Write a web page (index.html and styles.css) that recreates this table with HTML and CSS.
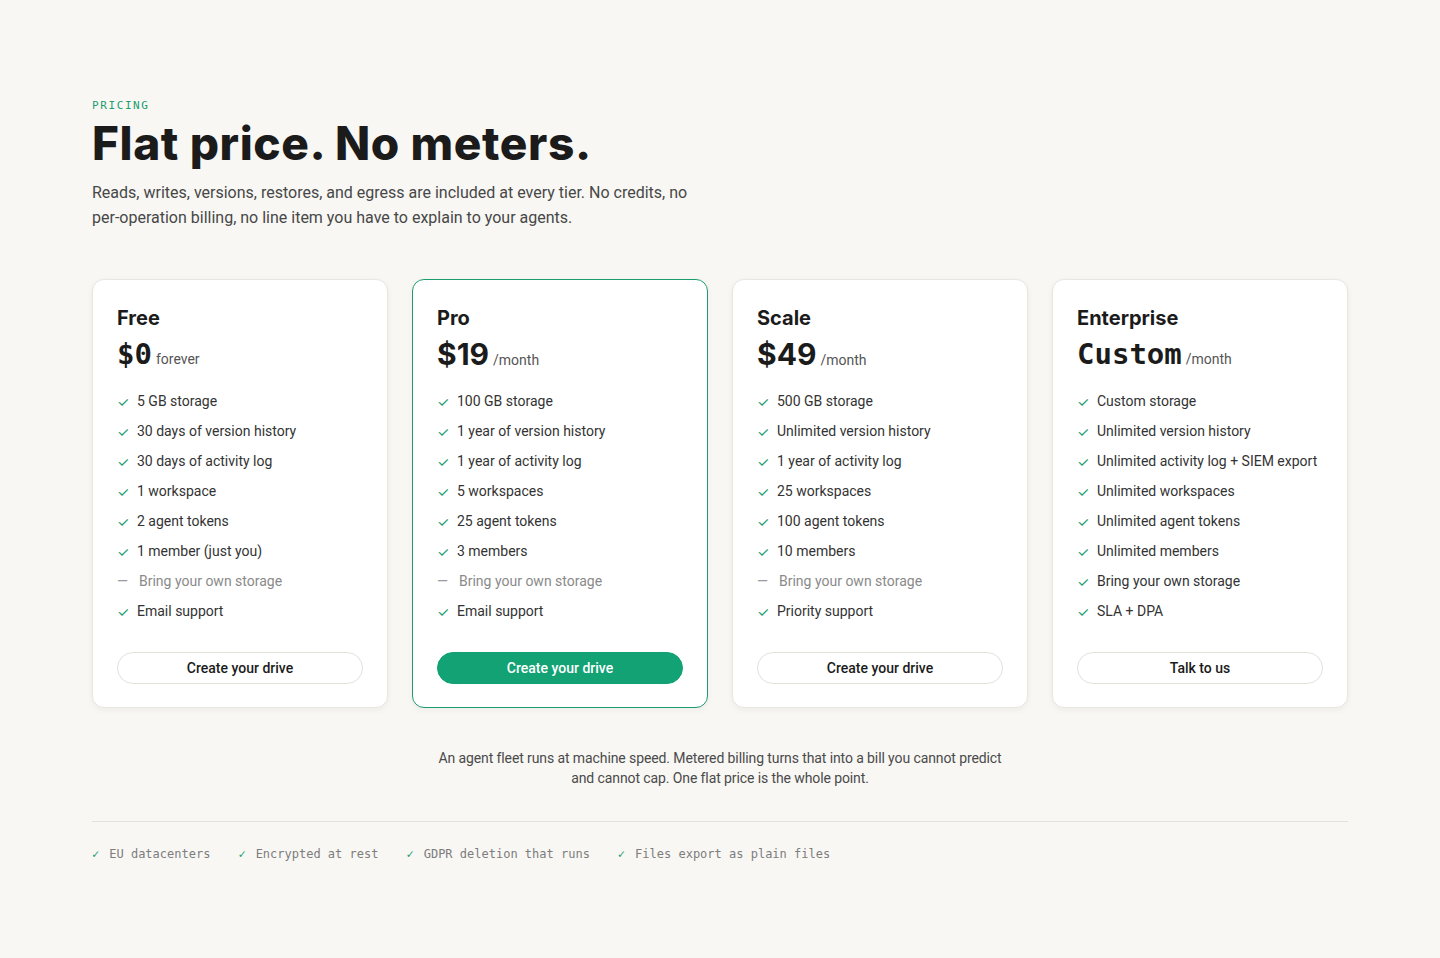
FILE: index.html
```html
<!DOCTYPE html>
<html lang="en">
<head>
<meta charset="utf-8">
<title>Pricing</title>
<link rel="stylesheet" href="styles.css">
</head>
<body>
<main class="page">
  <header class="intro">
    <div class="eyebrow">PRICING</div>
    <h1 class="title">Flat price. No meters.</h1>
    <p class="lede">Reads, writes, versions, restores, and egress are included at every tier. No credits, no per-operation billing, no line item you have to explain to your agents.</p>
  </header>

  <section class="plans">
    <article class="plan">
      <h2 class="plan-name">Free</h2>
      <div class="price"><span class="amount mono">$0</span><span class="period">forever</span></div>
      <ul class="features">
        <li><span class="mark">✓</span>5 GB storage</li>
        <li><span class="mark">✓</span>30 days of version history</li>
        <li><span class="mark">✓</span>30 days of activity log</li>
        <li><span class="mark">✓</span>1 workspace</li>
        <li><span class="mark">✓</span>2 agent tokens</li>
        <li><span class="mark">✓</span>1 member (just you)</li>
        <li class="off"><span class="mark">—</span>Bring your own storage</li>
        <li><span class="mark">✓</span>Email support</li>
      </ul>
      <button class="btn">Create your drive</button>
    </article>

    <article class="plan featured">
      <h2 class="plan-name">Pro</h2>
      <div class="price"><span class="amount">$19</span><span class="period">/month</span></div>
      <ul class="features">
        <li><span class="mark">✓</span>100 GB storage</li>
        <li><span class="mark">✓</span>1 year of version history</li>
        <li><span class="mark">✓</span>1 year of activity log</li>
        <li><span class="mark">✓</span>5 workspaces</li>
        <li><span class="mark">✓</span>25 agent tokens</li>
        <li><span class="mark">✓</span>3 members</li>
        <li class="off"><span class="mark">—</span>Bring your own storage</li>
        <li><span class="mark">✓</span>Email support</li>
      </ul>
      <button class="btn btn-primary">Create your drive</button>
    </article>

    <article class="plan">
      <h2 class="plan-name">Scale</h2>
      <div class="price"><span class="amount">$49</span><span class="period">/month</span></div>
      <ul class="features">
        <li><span class="mark">✓</span>500 GB storage</li>
        <li><span class="mark">✓</span>Unlimited version history</li>
        <li><span class="mark">✓</span>1 year of activity log</li>
        <li><span class="mark">✓</span>25 workspaces</li>
        <li><span class="mark">✓</span>100 agent tokens</li>
        <li><span class="mark">✓</span>10 members</li>
        <li class="off"><span class="mark">—</span>Bring your own storage</li>
        <li><span class="mark">✓</span>Priority support</li>
      </ul>
      <button class="btn">Create your drive</button>
    </article>

    <article class="plan">
      <h2 class="plan-name">Enterprise</h2>
      <div class="price"><span class="amount mono">Custom</span><span class="period">/month</span></div>
      <ul class="features">
        <li><span class="mark">✓</span>Custom storage</li>
        <li><span class="mark">✓</span>Unlimited version history</li>
        <li><span class="mark">✓</span>Unlimited activity log + SIEM export</li>
        <li><span class="mark">✓</span>Unlimited workspaces</li>
        <li><span class="mark">✓</span>Unlimited agent tokens</li>
        <li><span class="mark">✓</span>Unlimited members</li>
        <li><span class="mark">✓</span>Bring your own storage</li>
        <li><span class="mark">✓</span>SLA + DPA</li>
      </ul>
      <button class="btn">Talk to us</button>
    </article>
  </section>

  <p class="note">An agent fleet runs at machine speed. Metered billing turns that into a bill you cannot predict and cannot cap. One flat price is the whole point.</p>

  <footer class="assurances">
    <span class="assurance"><span class="tick">✓</span>EU datacenters</span>
    <span class="assurance"><span class="tick">✓</span>Encrypted at rest</span>
    <span class="assurance"><span class="tick">✓</span>GDPR deletion that runs</span>
    <span class="assurance"><span class="tick">✓</span>Files export as plain files</span>
  </footer>
</main>
</body>
</html>
```

FILE: styles.css
```css
* { box-sizing: border-box; }

html, body {
  margin: 0;
  padding: 0;
  background: #f8f7f4;
}

body {
  font-family: "Roboto", "Inter", "Liberation Sans", sans-serif;
  color: #1d1d1d;
}

.page {
  width: 1256px;
  margin: 0 auto;
  padding-top: 99px;
}

.eyebrow {
  font-family: "DejaVu Sans Mono", "Liberation Mono", monospace;
  font-size: 11px;
  letter-spacing: 1.6px;
  color: #1c9c6f;
  line-height: 14px;
}

.title {
  margin: 6px 0 0;
  font-family: "Inter", "DejaVu Sans", sans-serif;
  font-weight: 800;
  font-size: 46px;
  line-height: 48px;
  letter-spacing: 0.6px;
  color: #1b1b1b;
}

.lede {
  margin: 13px 0 0;
  width: 610px;
  font-size: 16px;
  line-height: 25px;
  color: #474747;
}

.plans {
  margin-top: 49px;
  display: grid;
  grid-template-columns: repeat(4, 1fr);
  gap: 24px;
}

.plan {
  background: #ffffff;
  border: 1px solid #e9e6e0;
  border-radius: 12px;
  padding: 24px 24px 23px;
  box-shadow: 0 2px 6px rgba(40, 30, 10, 0.05);
  display: flex;
  flex-direction: column;
}

.plan.featured {
  border-color: #1c9c6f;
}

.plan-name {
  margin: 0;
  font-family: "Inter", "Roboto", sans-serif;
  font-size: 20px;
  font-weight: 700;
  line-height: 28px;
  color: #1b1b1b;
}

.price {
  margin-top: 4px;
  display: flex;
  align-items: baseline;
  gap: 4px;
  height: 36px;
}

.amount {
  font-family: "Inter", "Roboto", sans-serif;
  font-size: 30px;
  font-weight: 700;
  line-height: 36px;
  color: #1b1b1b;
}

.amount.mono {
  font-family: "DejaVu Sans Mono", "Liberation Mono", monospace;
  font-size: 29px;
}

.period {
  font-size: 14px;
  color: #555;
}

.features {
  list-style: none;
  margin: 14px 0 0;
  padding: 0;
}

.features li {
  display: flex;
  align-items: center;
  height: 30px;
  font-size: 14px;
  color: #333;
}

.features .mark {
  color: #1c9c6f;
  font-size: 14px;
  width: 20px;
  flex: none;
}

.features li.off {
  color: #8a8a8a;
}

.features li.off .mark {
  color: #9a9a9a;
  font-size: 14px;
  width: 22px;
}

.btn {
  margin-top: 26px;
  height: 32px;
  width: 100%;
  border-radius: 999px;
  border: 1px solid #e4e1db;
  background: #ffffff;
  font-family: "Roboto", "Inter", sans-serif;
  font-size: 14px;
  font-weight: 500;
  color: #1b1b1b;
  cursor: pointer;
}

.btn-primary {
  background: #13a274;
  border-color: #13a274;
  color: #ffffff;
}

.note {
  margin: 40px auto 0;
  width: 580px;
  text-align: center;
  font-size: 14px;
  line-height: 20px;
  letter-spacing: -0.1px;
  color: #4a4a4a;
}

.assurances {
  margin-top: 33px;
  border-top: 1px solid #e5e2dc;
  padding-top: 24px;
  display: flex;
  gap: 28px;
  font-family: "DejaVu Sans Mono", "Liberation Mono", monospace;
  font-size: 12px;
  line-height: 16px;
  color: #7d7d7d;
}

.assurance .tick {
  color: #1c9c6f;
  margin-right: 10px;
}
```
